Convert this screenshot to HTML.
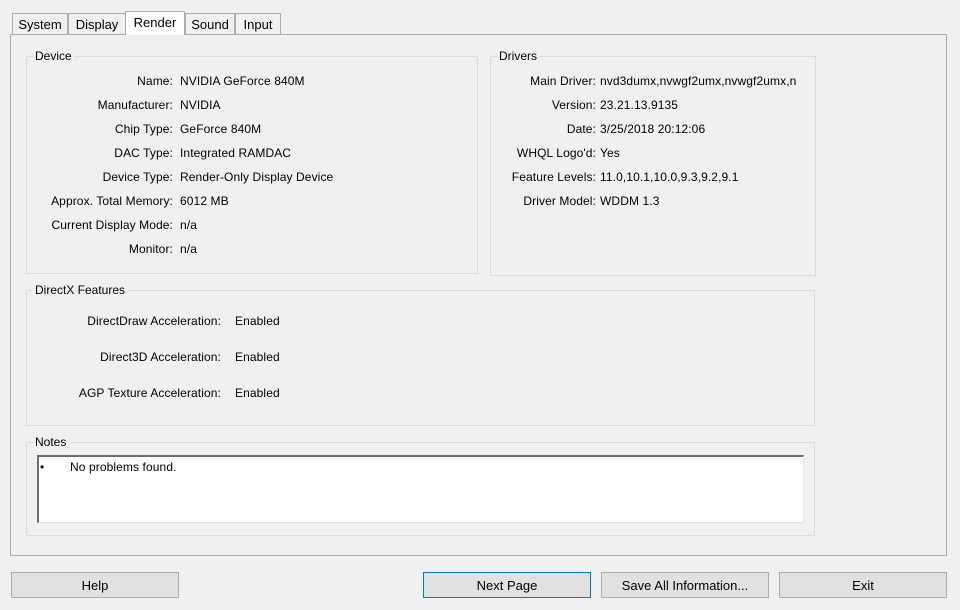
<!DOCTYPE html>
<html><head><style>
body{margin:0;width:960px;height:610px;background:#f0f0f0;font-family:"Liberation Sans",sans-serif;font-size:12px;color:#000;position:relative;overflow:hidden}
.a{position:absolute}
.tab{position:absolute;top:13px;height:21px;border:1px solid #adadad;border-bottom:none;background:#f0f0f0;font-size:13px;line-height:22px;text-align:center;box-sizing:border-box}
.panel{left:10px;top:34px;width:937px;height:522px;border:1px solid #adadad;box-sizing:border-box;background:#f0f0f0}
.gb{position:absolute;border:1px solid #dcdcdc;box-sizing:border-box}
.gt{position:absolute;top:-8px;left:6px;background:#f0f0f0;padding:0 2px;line-height:15px}
.l{position:absolute;text-align:right;line-height:16px;white-space:nowrap;letter-spacing:0.1px}
.v{position:absolute;line-height:16px;white-space:nowrap;letter-spacing:0.1px}
.btn{position:absolute;top:572px;width:168px;height:26px;border:1px solid #adadad;background:#e1e1e1;box-sizing:border-box;text-align:center;line-height:25px;font-size:13px}
</style></head><body>
<div class="a panel"></div>
<div class="tab" style="left:12px;width:56px">System</div>
<div class="tab" style="left:68px;width:58px">Display</div>
<div class="tab" style="left:125px;width:60px;top:11px;height:24px;background:#fff;line-height:22px;z-index:2">Render</div>
<div class="tab" style="left:185px;width:50px">Sound</div>
<div class="tab" style="left:235px;width:46px">Input</div>

<div class="gb" style="left:26px;top:56px;width:452px;height:218px"><div class="gt">Device</div></div>
<div class="gb" style="left:490px;top:56px;width:326px;height:220px"><div class="gt">Drivers</div></div>
<div class="gb" style="left:26px;top:290px;width:789px;height:136px"><div class="gt">DirectX Features</div></div>
<div class="gb" style="left:26px;top:442px;width:789px;height:94px"><div class="gt">Notes</div></div>
<div class="a" style="left:37px;top:455px;width:767px;height:68px;background:#fff;border-top:2px solid #6d6d6d;border-left:2px solid #6d6d6d;border-right:1px solid #e3e3e3;border-bottom:1px solid #e3e3e3;box-sizing:border-box"></div>
<div class="v" style="left:40px;top:459px">•</div>
<div class="v" style="left:70px;top:459px">No problems found.</div>

<div class="l" style="right:787px;top:73px">Name:</div><div class="v" style="left:180px;top:73px">NVIDIA GeForce 840M</div>
<div class="l" style="right:787px;top:97px">Manufacturer:</div><div class="v" style="left:180px;top:97px">NVIDIA</div>
<div class="l" style="right:787px;top:121px">Chip Type:</div><div class="v" style="left:180px;top:121px">GeForce 840M</div>
<div class="l" style="right:787px;top:145px">DAC Type:</div><div class="v" style="left:180px;top:145px">Integrated RAMDAC</div>
<div class="l" style="right:787px;top:169px">Device Type:</div><div class="v" style="left:180px;top:169px">Render-Only Display Device</div>
<div class="l" style="right:787px;top:193px">Approx. Total Memory:</div><div class="v" style="left:180px;top:193px">6012 MB</div>
<div class="l" style="right:787px;top:217px">Current Display Mode:</div><div class="v" style="left:180px;top:217px">n/a</div>
<div class="l" style="right:787px;top:241px">Monitor:</div><div class="v" style="left:180px;top:241px">n/a</div>

<div class="l" style="right:364px;top:73px">Main Driver:</div><div class="v" style="left:600px;top:73px;width:207px;overflow:hidden">nvd3dumx,nvwgf2umx,nvwgf2umx,n</div>
<div class="l" style="right:364px;top:97px">Version:</div><div class="v" style="left:600px;top:97px">23.21.13.9135</div>
<div class="l" style="right:364px;top:121px">Date:</div><div class="v" style="left:600px;top:121px">3/25/2018 20:12:06</div>
<div class="l" style="right:364px;top:145px">WHQL Logo'd:</div><div class="v" style="left:600px;top:145px">Yes</div>
<div class="l" style="right:364px;top:169px">Feature Levels:</div><div class="v" style="left:600px;top:169px">11.0,10.1,10.0,9.3,9.2,9.1</div>
<div class="l" style="right:364px;top:193px">Driver Model:</div><div class="v" style="left:600px;top:193px">WDDM 1.3</div>

<div class="l" style="right:739px;top:313px">DirectDraw Acceleration:</div><div class="v" style="left:235px;top:313px">Enabled</div>
<div class="l" style="right:739px;top:349px">Direct3D Acceleration:</div><div class="v" style="left:235px;top:349px">Enabled</div>
<div class="l" style="right:739px;top:385px">AGP Texture Acceleration:</div><div class="v" style="left:235px;top:385px">Enabled</div>

<div class="btn" style="left:11px">Help</div>
<div class="btn" style="left:423px;border-color:#0078d7">Next Page</div>
<div class="btn" style="left:601px">Save All Information...</div>
<div class="btn" style="left:779px">Exit</div>
</body></html>
